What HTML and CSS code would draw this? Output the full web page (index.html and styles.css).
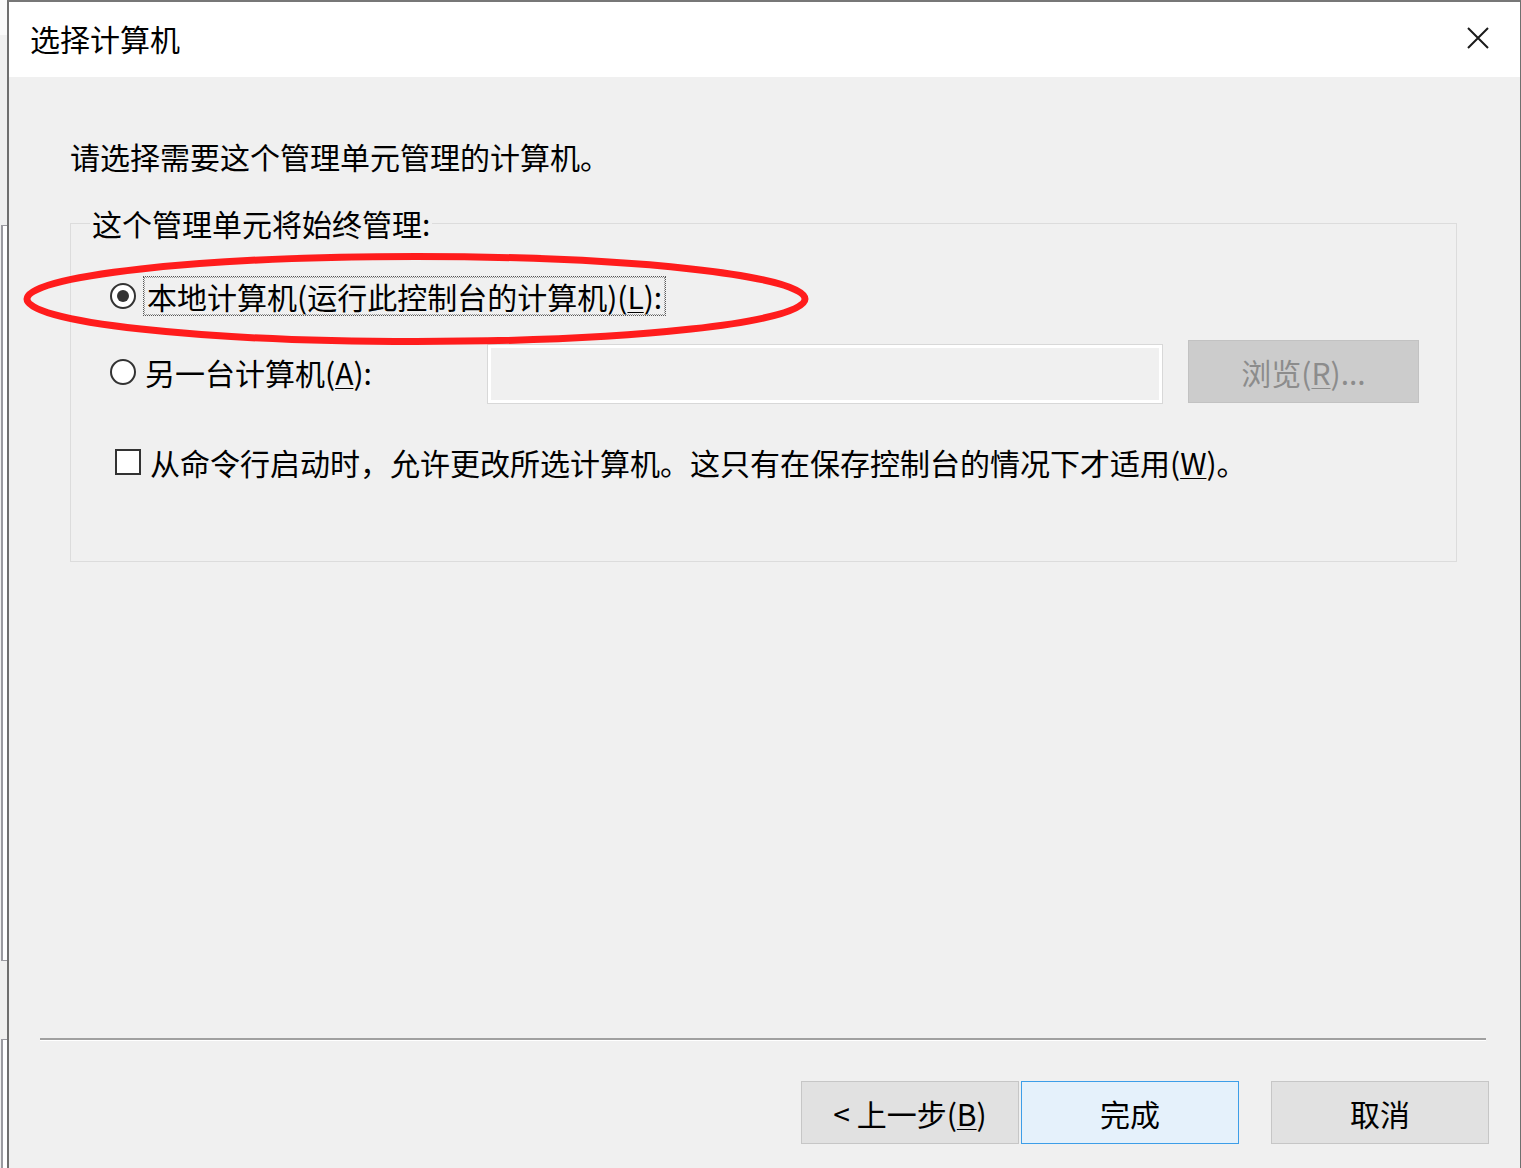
FILE: index.html
```html
<!DOCTYPE html>
<html lang="zh-CN">
<head>
<meta charset="utf-8">
<title>选择计算机</title>
<link rel="stylesheet" href="styles.css">
</head>
<body>
<div class="screen">
  <div class="bgwin">
    <div class="bg-top"></div>
    <div class="bg-gap1"></div>
    <div class="bg-box"></div>
    <div class="bg-gap2"></div>
    <div class="bg-box bg-box-last"></div>
  </div>
  <div class="dialog">
    <div class="titlebar">
      <span class="title">选择计算机</span>
      <span class="close">
        <svg width="22" height="22" viewBox="0 0 22 22"><path d="M1 1L21 21M21 1L1 21" stroke="#1a1a1a" stroke-width="2" fill="none"/></svg>
      </span>
    </div>
    <div class="content">
      <div class="main">
        <p class="intro">请选择需要这个管理单元管理的计算机。</p>
        <fieldset class="group">
          <legend class="legend">这个管理单元将始终管理:</legend>
          <div class="row row-local">
            <span class="radio radio-on"><span class="dot"></span></span>
            <span class="focus-label">本地计算机(运行此控制台的计算机)(<u>L</u>):</span>
          </div>
          <div class="row row-other">
            <div class="other-label">
              <span class="radio"></span>
              <span class="label">另一台计算机(<u>A</u>):</span>
            </div>
            <div class="textbox"></div>
            <div class="btn-browse">浏览(<u>R</u>)...</div>
          </div>
          <div class="row row-check">
            <span class="checkbox"></span>
            <span class="label">从命令行启动时，允许更改所选计算机。这只有在保存控制台的情况下才适用(<u>W</u>)。</span>
          </div>
        </fieldset>
      </div>
      <div class="footer">
        <div class="separator"></div>
        <div class="buttons">
          <div class="btn">&lt; 上一步(<u>B</u>)</div>
          <div class="btn btn-default">完成</div>
          <div class="btn btn-cancel">取消</div>
        </div>
      </div>
    </div>
  </div>
  <svg class="annotation" width="1521" height="1168" viewBox="0 0 1521 1168">
    <ellipse cx="416" cy="299" rx="389" ry="42.5" fill="none" stroke="#ff1c1c" stroke-width="7"/>
  </svg>
</div>
</body>
</html>
```

FILE: styles.css
```css
html, body {
  margin: 0;
  padding: 0;
}
body {
  width: 1521px;
  height: 1168px;
  overflow: hidden;
  background: #f0f0f0;
  font-family: "Microsoft YaHei", "Noto Sans CJK SC", "Noto Sans", sans-serif;
  color: #000;
}
.screen {
  position: relative;
  display: flex;
  width: 1521px;
  height: 1168px;
}
.bgwin {
  width: 7px;
  flex: none;
  display: flex;
  flex-direction: column;
  background: #f0f0f0;
}
.bg-top {
  height: 35px;
  background: #fafafa;
}
.bg-gap1 {
  height: 190px;
}
.bg-box {
  height: 734px;
  background: #fff;
  border-left: 2px solid #9a9aa0;
  border-top: 1px solid #9a9aa0;
  border-bottom: 1px solid #9a9aa0;
  margin-left: 1px;
}
.bg-gap2 {
  height: 78px;
}
.bg-box-last {
  flex: 1;
  border-bottom: none;
}
.dialog {
  flex: 1;
  display: flex;
  flex-direction: column;
  border-left: 2px solid #6f6f6f;
  border-right: 1px solid #6f6f6f;
  border-top: 2px solid #777;
  background: #f0f0f0;
}
.titlebar {
  height: 72px;
  padding-bottom: 3px;
  background: #fff;
  display: flex;
  align-items: center;
  justify-content: space-between;
  padding-left: 21px;
  padding-right: 31px;
}
.title {
  font-size: 30px;
  line-height: 40px;
}
.close {
  display: flex;
  width: 22px;
  height: 22px;
}
.content {
  flex: 1;
  display: flex;
  flex-direction: column;
}
.main {
  flex: 1;
  padding: 0 63px 0 61px;
}
.intro {
  margin: 59px 0 0;
  font-size: 30px;
  line-height: 40px;
}
.group {
  margin: 30px 0 0;
  padding: 36px 37px 79px 39px;
  border: 1px solid #dcdcdc;
  border-radius: 0;
  min-width: 0;
}
.legend {
  margin-left: -20px;
  padding: 0 2px;
  font-size: 30px;
  line-height: 34px;
}
.row {
  display: flex;
  align-items: center;
  font-size: 30px;
}
.row-local {
  height: 40px;
}
.radio {
  width: 22px;
  height: 22px;
  border: 2px solid #333;
  border-radius: 50%;
  background: #fff;
  flex: none;
  display: flex;
  align-items: center;
  justify-content: center;
}
.dot {
  width: 12px;
  height: 12px;
  border-radius: 50%;
  background: #333;
}
.focus-label {
  margin-left: 7px;
  padding: 0 3px;
  line-height: 38px;
  border: 1px dotted #555;
  outline: 1px dotted #999;
  outline-offset: -2px;
}
.row-other {
  margin-top: 24px;
  height: 64px;
}
.other-label {
  width: 377px;
  flex: none;
  display: flex;
  align-items: center;
}
.other-label .label {
  margin-left: 9px;
}
.textbox {
  flex: 1;
  height: 58px;
  align-self: flex-end;
  border: 1px solid #d8d8d8;
  box-shadow: inset 0 0 0 3px #fff;
  background: #f0f0f0;
}
.btn-browse {
  width: 229px;
  height: 61px;
  margin-left: 25px;
  align-self: flex-start;
  border: 1px solid #c2c2c2;
  background: #cccccc;
  color: #8c8c8c;
  display: flex;
  align-items: center;
  justify-content: center;
  font-size: 30px;
}
.row-check {
  margin-top: 38px;
  height: 40px;
  padding-left: 5px;
}
.checkbox {
  width: 22px;
  height: 22px;
  border: 2px solid #333;
  background: #fff;
  flex: none;
}
.row-check .label {
  margin-left: 9px;
}
u {
  text-decoration-thickness: 1px;
  text-underline-offset: 3px;
}
.footer {
  padding: 0 31px 24px 31px;
}
.separator {
  margin-right: 3px;
  height: 1px;
  border-top: 2px solid #a0a0a0;
  background: #fff;
}
.buttons {
  margin-top: 40px;
  display: flex;
  justify-content: flex-end;
  gap: 2px;
}
.btn {
  width: 216px;
  height: 61px;
  border: 1px solid #c6c6c6;
  background: #e1e1e1;
  display: flex;
  align-items: center;
  justify-content: center;
  font-size: 30px;
}
.btn-default {
  border-color: #3d9ee8;
  background: #e5f1fb;
}
.btn-cancel {
  margin-left: 30px;
}
.annotation {
  position: absolute;
  left: 0;
  top: 0;
  pointer-events: none;
}
```
